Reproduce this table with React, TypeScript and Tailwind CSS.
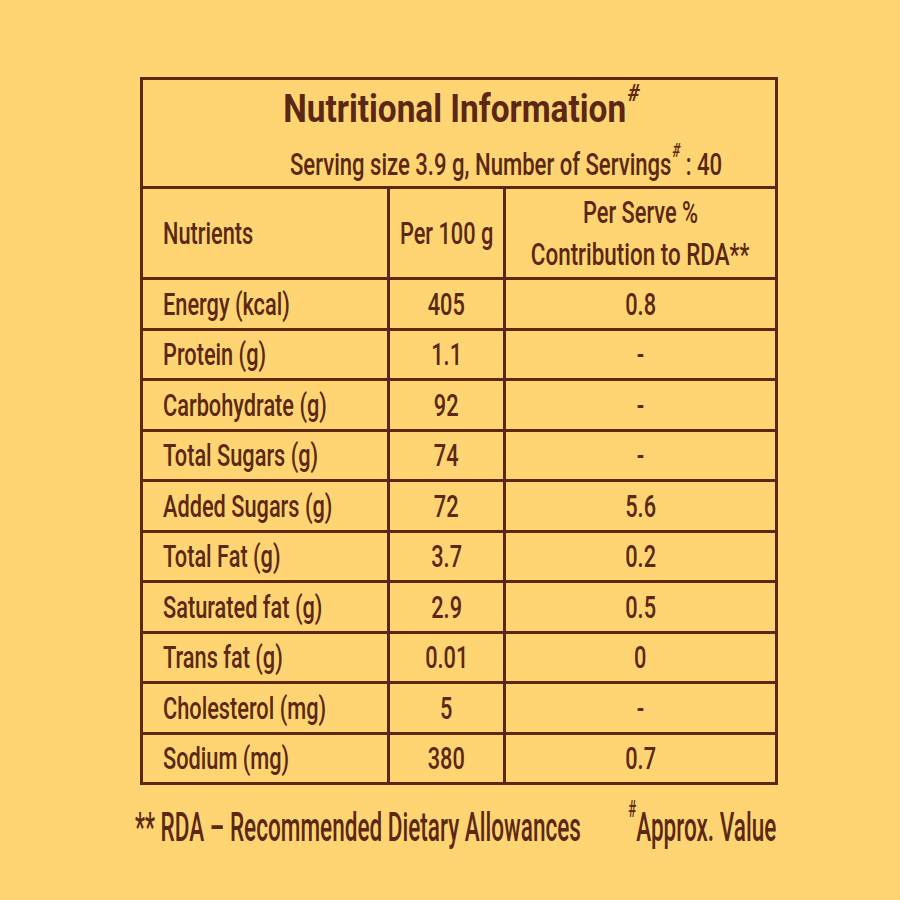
const rows: [string, string, string][] = [
  ['Energy (kcal)', '405', '0.8'],
  ['Protein (g)', '1.1', '-'],
  ['Carbohydrate (g)', '92', '-'],
  ['Total Sugars (g)', '74', '-'],
  ['Added Sugars (g)', '72', '5.6'],
  ['Total Fat (g)', '3.7', '0.2'],
  ['Saturated fat (g)', '2.9', '0.5'],
  ['Trans fat (g)', '0.01', '0'],
  ['Cholesterol (mg)', '5', '-'],
  ['Sodium (mg)', '380', '0.7'],
]

// condensed look: the label font is narrow, so squeeze Roboto horizontally
function Narrow({ children, left }: { children: React.ReactNode; left?: boolean }) {
  return (
    <span className={`inline-block whitespace-nowrap scale-x-[0.68] ${left ? 'origin-left' : 'origin-center'}`}>
      {children}
    </span>
  )
}

export default function App() {
  return (
    <div className="w-[900px] h-[900px] overflow-hidden bg-[#ffd573] pt-[77px] text-[#5a2814] font-['Roboto',sans-serif] font-medium">
      <div className="ml-[140px] w-[638px] border-[3px] border-[#5a2814]">
        <div className="h-[106px] flex flex-col">
          <div className="flex justify-center text-[39px] font-bold leading-none pt-[10px] pl-[4px]">
            <span className="inline-block whitespace-nowrap scale-x-[0.855] origin-center">
              Nutritional Information<sup className="text-[24px] italic align-[9px] ml-[2px]">#</sup>
            </span>
          </div>
          <div className="text-[32px] leading-none mt-[19px] pl-[147px]">
            <span className="inline-block whitespace-nowrap scale-x-[0.69] origin-left">
              Serving size 3.9 g, Number of Servings<sup className="text-[20px] italic align-[8px] ml-[1px]">#</sup> : 40
            </span>
          </div>
        </div>
        <div className="flex h-[91px] border-t-[3px] border-[#5a2814] text-[32px] leading-[42px]">
          <div className="w-[244px] shrink-0 flex items-center pl-[20px]">
            <Narrow left>Nutrients</Narrow>
          </div>
          <div className="w-[116px] shrink-0 border-l-[3px] border-[#5a2814] flex items-center justify-center">
            <Narrow>Per 100 g</Narrow>
          </div>
          <div className="flex-1 min-w-0 border-l-[3px] border-[#5a2814] flex flex-col items-center justify-center">
            <Narrow>Per Serve %</Narrow>
            <span className="inline-block whitespace-nowrap scale-x-[0.7] origin-center">Contribution to RDA**</span>
          </div>
        </div>
        {rows.map(([name, per100, rda]) => (
          <div key={name} className="flex h-[50.5px] border-t-[3px] border-[#5a2814] text-[32px] leading-none">
            <div className="w-[244px] shrink-0 flex items-center pl-[20px]">
              <Narrow left>{name}</Narrow>
            </div>
            <div className="w-[116px] shrink-0 border-l-[3px] border-[#5a2814] flex items-center justify-center">
              <Narrow>{per100}</Narrow>
            </div>
            <div className="flex-1 min-w-0 border-l-[3px] border-[#5a2814] flex items-center justify-center">
              <Narrow>{rda}</Narrow>
            </div>
          </div>
        ))}
      </div>
      <div className="flex ml-[135px] w-[641px] mt-[22px] text-[41px] leading-none">
        <div className="flex-1 min-w-0">
          <span className="inline-block whitespace-nowrap scale-x-[0.55] origin-left">
            ** RDA – Recommended Dietary Allowances
          </span>
        </div>
        <div className="w-[160px] shrink-0 flex justify-end">
          <span className="inline-block whitespace-nowrap scale-x-[0.55] origin-right">
            <sup className="text-[24px] align-[12px]">#</sup>Approx. Value
          </span>
        </div>
      </div>
    </div>
  )
}
